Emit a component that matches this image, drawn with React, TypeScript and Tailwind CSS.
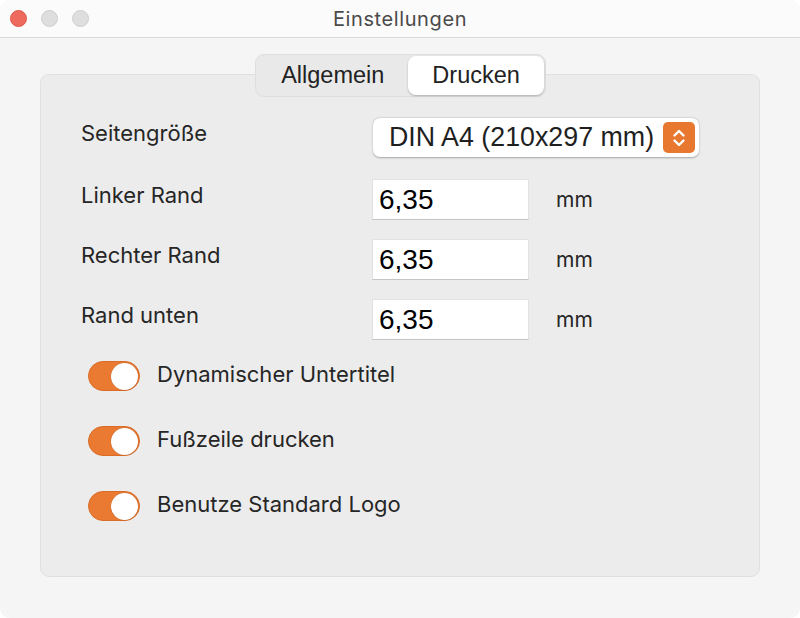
import { useState } from "react";

const labelFont = { fontFamily: "Inter, 'Liberation Sans', sans-serif" };

function Toggle({ label }: { label: string }) {
  const [on, setOn] = useState(true);
  return (
    <div className="flex h-[30px] items-center">
      <button
        type="button"
        onClick={() => setOn(!on)}
        className={`ml-[7px] flex h-[30px] w-[52px] items-center rounded-full border p-[1px] ${
          on ? "justify-end border-[#d96c26] bg-[#ea7a32]" : "justify-start border-[#cfcfcf] bg-[#e2e2e2]"
        }`}
      >
        <span className="h-[27px] w-[27px] rounded-full bg-white shadow-[0_0_1px_rgba(0,0,0,0.3)]" />
      </button>
      <span className="ml-[17px] pb-[4px] text-[22px] text-[#262626]" style={labelFont}>
        {label}
      </span>
    </div>
  );
}

function MarginRow({ label }: { label: string }) {
  return (
    <div className="flex h-[41px] items-center">
      <span className="w-[291px] pb-[8px] text-[22px] text-[#262626]" style={labelFont}>
        {label}
      </span>
      <div className="flex h-[41px] w-[157px] items-center border border-[#e2e2e2] border-b-[#c4c4c4] bg-white px-[6px] pt-[1px] font-['Liberation_Sans',sans-serif] text-[28px] text-black">
        6,35
      </div>
      <span className="ml-[27px] text-[21px] text-[#262626]" style={labelFont}>
        mm
      </span>
    </div>
  );
}

export default function App() {
  return (
    <div className="h-[618px] w-[800px] bg-white">
      <div className="flex h-full flex-col overflow-hidden rounded-[10px] bg-[#f5f5f5]">
        <div className="relative flex h-[38px] shrink-0 items-center justify-center border-b border-[#dadada] bg-[#fbfbfb]">
          <div className="absolute left-[10px] top-[10px] flex gap-[14px]">
            <span className="h-[17px] w-[17px] rounded-full border border-[#e0574c] bg-[#ee6a5f]" />
            <span className="h-[17px] w-[17px] rounded-full border border-[#cdcdcd] bg-[#dedede]" />
            <span className="h-[17px] w-[17px] rounded-full border border-[#cdcdcd] bg-[#dedede]" />
          </div>
          <span className="text-[20px] tracking-[0.6px] text-[#4a4a4a]" style={labelFont}>
            Einstellungen
          </span>
        </div>

        <div className="flex flex-col px-[40px] pt-[16px]">
          <div className="relative z-10 flex justify-center">
            <div className="ml-[1px] flex h-[43px] items-center rounded-[9px] border border-[#dedede] bg-[#e9e9e9] p-[1px] font-['Liberation_Sans',sans-serif] text-[23.5px] text-[#222]">
              <span className="px-[24px]">Allgemein</span>
              <span className="flex h-[39px] items-center rounded-[8px] bg-white px-[24px] shadow-[0_1px_2px_rgba(0,0,0,0.25)]">
                Drucken
              </span>
            </div>
          </div>

          <div className="-mt-[23px] flex h-[503px] flex-col rounded-[9px] border border-[#e0e0e0] bg-[#ececec] px-[40px] pt-[43px]">
            <div className="flex h-[39px] items-center">
              <span className="w-[292px] pb-[8px] text-[22px] text-[#262626]" style={labelFont}>
                Seitengröße
              </span>
              <div className="flex h-[39px] w-[326px] items-center rounded-[7px] bg-white pl-[16px] pr-[4px] shadow-[0_0.5px_2px_rgba(0,0,0,0.3)]">
                <span className="flex-1 whitespace-nowrap font-['Liberation_Sans',sans-serif] text-[26.8px] text-[#1f1f1f]">
                  DIN A4 (210x297 mm)
                </span>
                <span className="flex h-[31px] w-[32px] shrink-0 items-center justify-center rounded-[5px] bg-[#e8782f]">
                  <svg width="16" height="22" viewBox="0 0 16 22" fill="none" stroke="white" strokeWidth="2.4" strokeLinecap="round" strokeLinejoin="round">
                    <path d="M3.5 8.5 L8 4 L12.5 8.5" />
                    <path d="M3.5 13.5 L8 18 L12.5 13.5" />
                  </svg>
                </span>
              </div>
            </div>

            <div className="mt-[22px] flex flex-col gap-[19px]">
              <MarginRow label="Linker Rand" />
              <MarginRow label="Rechter Rand" />
              <MarginRow label="Rand unten" />
            </div>

            <div className="mt-[21px] flex flex-col gap-[35px]">
              <Toggle label="Dynamischer Untertitel" />
              <Toggle label="Fußzeile drucken" />
              <Toggle label="Benutze Standard Logo" />
            </div>
          </div>
        </div>
      </div>
    </div>
  );
}
